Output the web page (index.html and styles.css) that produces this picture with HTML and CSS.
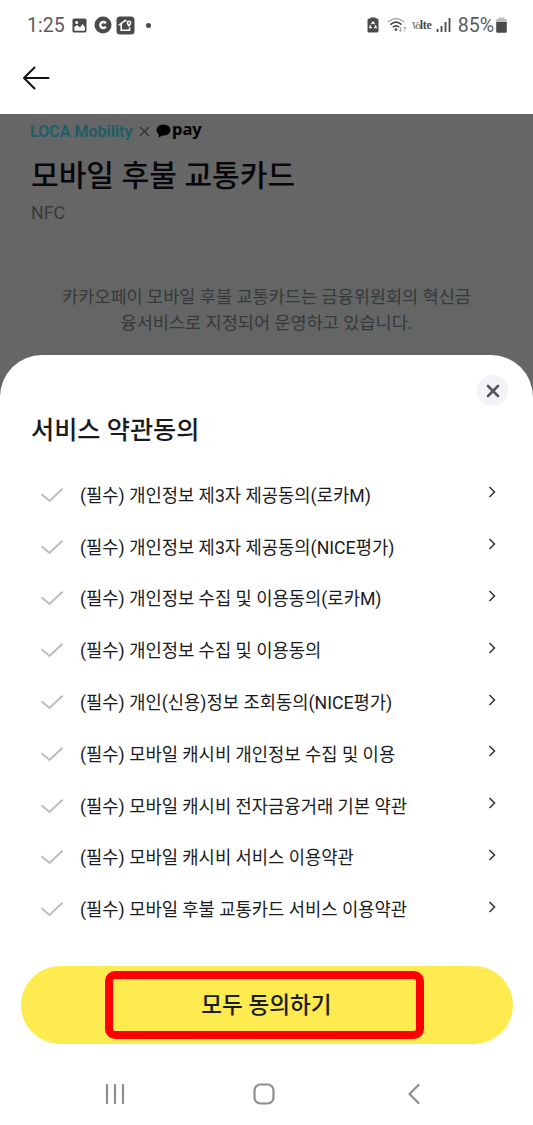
FILE: index.html
```html
<!DOCTYPE html>
<html lang="ko">

<head>
    <meta charset="UTF-8">
    <meta name="viewport" content="width=device-width, initial-scale=1.0">
    <title>모바일 후불 교통카드</title>
    <link rel="stylesheet" href="styles.css">
</head>

<body>
    <div class="status-bar">
        <span class="time">1:25</span>
        <svg class="icon-gallery" width="15" height="15" viewBox="0 0 16 16">
            <rect x="0.5" y="0.5" width="15" height="15" rx="2" fill="#4a4a4a"/>
            <circle cx="5" cy="4.8" r="1.6" fill="#fff"/>
            <path d="M2.500 9.500L5.500 7.500l3 2.500L11.300 6.500l2.400 3v4H2.500z" fill="#fff"/>
        </svg>
        <svg class="icon-c" width="18" height="18" viewBox="0 0 18 18">
            <circle cx="9" cy="9" r="8.5" fill="#4a4a4a"/>
            <path d="M11.800 7.400A3 3 0 1 0 11.800 10.600" fill="none" stroke="#fff" stroke-width="2.400"/>
        </svg>
        <svg class="icon-home-app" width="19" height="19" viewBox="0 0 19 19">
            <rect x="0.5" y="0.5" width="18" height="18" rx="3.500" fill="#4a4a4a"/>
            <path d="M10.500 5L9.200 4.400 4 8.400h1.200v5.800h8.400v-2.600" fill="none" stroke="#fff" stroke-width="1.600"/>
            <path d="M13 4.600a2.300 2.300 0 0 1 2.300 2.300c0 1.700-2.300 4-2.300 4s-2.300-2.300-2.300-4A2.300 2.300 0 0 1 13 4.600z" fill="#fff"/>
            <circle cx="13" cy="6.900" r="0.900" fill="#4a4a4a"/>
        </svg>
        <span class="dot"></span>
        <svg class="icon-saver" width="12" height="16" viewBox="0 0 12 16">
            <path d="M3.500 1.600V0.500h5v1.100H10a1.500 1.500 0 0 1 1.500 1.500v11A1.400 1.400 0 0 1 10 15.500H2a1.400 1.400 0 0 1-1.500-1.400v-11A1.500 1.500 0 0 1 2 1.600z" fill="#4a4a4a"/>
            <path d="M4.400 7L6 5l1.600 2M8.400 8.300l.8 2.400H7M5 10.700H2.800l.8-2.400" fill="none" stroke="#fff" stroke-width="1.300"/>
        </svg>
        <svg class="icon-wifi" width="21" height="16" viewBox="0 0 21 16">
            <g fill="none" stroke-width="1.600">
                <path d="M1 5Q9 -2 17 5" stroke="#aaa"/>
                <path d="M3.400 7.600Q9 2.800 14.600 7.600" stroke="#4a4a4a"/>
                <path d="M5.800 10.200Q9 7.600 12.200 10.200" stroke="#4a4a4a"/>
            </g>
            <circle cx="9" cy="12.600" r="1.400" fill="#4a4a4a"/>
            <path d="M13.500 10v4.500M12 13l1.500 1.600L15 13M17.800 14.500V10M16.300 11.500l1.500-1.600 1.500 1.600" fill="none" stroke="#aaa" stroke-width="1"/>
        </svg>
        <span class="volte"><i>Vo</i><b>lte</b></span>
        <svg class="icon-signal" width="15" height="16" viewBox="0 0 15 16">
            <path d="M1.500 15v-3M5.500 15V9M9.500 15V5M13.500 15V1" stroke="#4a4a4a" stroke-width="1.800"/>
        </svg>
        <span class="percent">85%</span>
        <svg class="icon-battery" width="11" height="16" viewBox="0 0 11 16">
            <path d="M2.500 2V.5h6V2H10a1 1 0 0 1 .8 1v2.500H.2V3A1 1 0 0 1 1 2z" fill="#bdbdbd"/>
            <path d="M.2 5h10.600v9.500a1.200 1.200 0 0 1-1.200 1.200H1.400A1.200 1.200 0 0 1 .2 14.500z" fill="#4a4a4a"/>
        </svg>
    </div>

    <div class="header">
        <svg width="28" height="24" viewBox="0 0 28 24">
            <path d="M26.500 12H2M12.500 1.500L2 12l10.500 10.500" fill="none" stroke="#111118" stroke-width="2" stroke-linecap="round" stroke-linejoin="round"/>
        </svg>
    </div>

    <!-- Dimmed page behind the sheet -->
    <div class="page">
        <div class="brand">
            <span class="loca">LOCA Mobility</span>
            <svg class="times" width="11" height="11" viewBox="0 0 11 11">
                <path d="M1 1l9 9M10 1l-9 9" stroke="#303030" stroke-width="1.200"/>
            </svg>
            <svg class="bubble" width="15" height="14" viewBox="0 0 15 14">
                <ellipse cx="7.500" cy="6" rx="7" ry="5.500" fill="#000"/>
                <path d="M2.500 9L2.800 13.500 8 10.500z" fill="#000"/>
            </svg>
            <span class="pay">pay</span>
        </div>
        <h1>모바일 후불 교통카드</h1>
        <p class="sub">NFC</p>
        <div class="notice">카카오페이 모바일 후불 교통카드는 금융위원회의 혁신금<br>융서비스로 지정되어 운영하고 있습니다.</div>
    </div>

    <!-- Terms sheet -->
    <div class="sheet">
        <button class="close">
            <svg width="14" height="14" viewBox="0 0 14 14">
                <path d="M2 2l10 10M12 2L2 12" stroke="#55565a" stroke-width="2.600" stroke-linecap="round"/>
            </svg>
        </button>
        <h2>서비스 약관동의</h2>
        <ul class="terms" id="terms"></ul>
        <button class="agree">
            <span class="highlight">모두 동의하기</span>
        </button>
    </div>

    <div class="nav-bar">
        <svg width="20" height="20" viewBox="0 0 20 20">
            <path d="M2 1v18M10 1v18M18 1v18" stroke="#8e8e8e" stroke-width="2.200" stroke-linecap="round"/>
        </svg>
        <svg class="home" width="22" height="22" viewBox="0 0 22 22">
            <rect x="1.500" y="1.500" width="19" height="19" rx="6" fill="none" stroke="#8e8e8e" stroke-width="2.200"/>
        </svg>
        <svg width="12" height="20" viewBox="0 0 12 20">
            <path d="M10.500 1L1.500 10l9 9" fill="none" stroke="#8e8e8e" stroke-width="2.200" stroke-linecap="round"/>
        </svg>
    </div>

    <script>
        const terms = [
            "개인정보 제3자 제공동의(로카M)",
            "개인정보 제3자 제공동의(NICE평가)",
            "개인정보 수집 및 이용동의(로카M)",
            "개인정보 수집 및 이용동의",
            "개인(신용)정보 조회동의(NICE평가)",
            "모바일 캐시비 개인정보 수집 및 이용",
            "모바일 캐시비 전자금융거래 기본 약관",
            "모바일 캐시비 서비스 이용약관",
            "모바일 후불 교통카드 서비스 이용약관"
        ];

        const list = document.getElementById("terms");
        terms.forEach(term => {
            const item = document.createElement("li");
            item.innerHTML = `
                <svg class="check" width="24" height="16" viewBox="0 0 24 16">
                    <path d="M1.500 7.300l8 6.700L22.500 1.800" fill="none" stroke="#bcbcbc" stroke-width="2"/>
                </svg>
                <span>(필수) ${term}</span>
                <svg class="arrow" width="8" height="12" viewBox="0 0 8 12">
                    <path d="M1.500 1L6.500 6l-5 5" fill="none" stroke="#333" stroke-width="1.500"/>
                </svg>
            `;
            list.appendChild(item);
        });
    </script>
</body>

</html>
```

FILE: styles.css
```css
* {
    margin: 0;
    padding: 0;
    box-sizing: border-box;
}

body {
    font-family: Roboto, "Noto Sans CJK KR", sans-serif;
    background-color: #fff;
    color: #1a1b20;
    width: 533px;
    height: 1125px;
    overflow: hidden;
}

svg {
    display: block;
    flex-shrink: 0;
}

button {
    border: none;
    font-family: inherit;
    color: inherit;
}

/* Status bar */
.status-bar {
    display: flex;
    align-items: center;
    height: 50px;
    padding: 0 26px 0 27px;
    color: #5c5c5c;
    font-size: 19.5px;
}

.time {
    width: 37px;
    margin-right: 8px;
}

.icon-gallery {
    margin-right: 7px;
}

.icon-c {
    margin-right: 4px;
}

.dot {
    width: 5px;
    height: 5px;
    margin-left: 11px;
    border-radius: 50%;
    background-color: #4a4a4a;
}

.icon-saver {
    margin-left: auto;
    margin-right: 8px;
}

.icon-wifi {
    margin-right: 4px;
}

.volte {
    display: flex;
    align-items: baseline;
    width: 22px;
    margin-right: 2px;
    font-family: "Liberation Serif", serif;
    font-size: 10px;
    letter-spacing: -1px;
}

.volte b {
    font-size: 12px;
    letter-spacing: -0.3px;
    color: #4a4a4a;
}

.percent {
    margin-left: 7px;
    margin-right: 2px;
}

/* Header */
.header {
    display: flex;
    align-items: center;
    height: 64px;
    padding: 0 22px 8px;
}

/* Page behind */
.page {
    height: 290px;
    padding: 5px 31px 0;
    background-color: #666;
}

.brand {
    display: flex;
    align-items: center;
    height: 24px;
    margin-left: -1px;
}

.loca {
    width: 103px;
    font-size: 16px;
    font-weight: bold;
    white-space: nowrap;
    color: #215e67;
}

.times {
    margin: 0 6px;
}

.bubble {
    margin-right: 1px;
}

.pay {
    font-family: "Noto Sans", sans-serif;
    font-size: 16.5px;
    font-weight: bold;
    line-height: 20px;
    color: #000;
    margin-top: -4px;
}

h1 {
    margin-top: 11px;
    font-size: 30.1px;
    font-weight: 500;
    line-height: 44px;
    color: #08080c;
}

.sub {
    margin-top: 4px;
    font-size: 17.8px;
    line-height: 22px;
    color: #3a3a3a;
}

.notice {
    height: 160px;
    margin-top: 33px;
    padding-top: 26px;
    border: 1px solid #616464;
    border-radius: 20px;
    background-color: #636665;
    color: #37393a;
    font-size: 17.55px;
    line-height: 26px;
    text-align: center;
    white-space: nowrap;
}

/* Terms sheet */
.sheet {
    position: relative;
    height: 708px;
    margin-top: -49px;
    padding: 57px 20px 0;
    border-radius: 42px 42px 0 0;
    background-color: #fff;
}

.close {
    position: absolute;
    top: 20px;
    right: 25px;
    display: flex;
    align-items: center;
    justify-content: center;
    width: 31px;
    height: 31px;
    border-radius: 50%;
    background-color: #f2f3f6;
}

h2 {
    padding-left: 11px;
    font-size: 25.2px;
    font-weight: 500;
    line-height: 38px;
}

.terms {
    margin-top: 18px;
    list-style: none;
}

.terms li {
    display: flex;
    align-items: center;
    height: 51.8px;
    padding: 0 17px 0 20px;
    font-size: 17.7px;
    white-space: nowrap;
}

.check {
    margin-right: 16px;
    margin-top: 2px;
}

.arrow {
    margin-left: auto;
    margin-top: -3px;
}

.agree {
    display: flex;
    justify-content: center;
    align-items: center;
    width: 492px;
    height: 78px;
    margin-top: 32px;
    margin-left: 1px;
    border-radius: 39px;
    background-color: #fdeb4f;
}

.highlight {
    width: 319px;
    height: 68px;
    margin-right: 5px;
    margin-top: -1px;
    padding-left: 4px;
    border: 8px solid #ff0000;
    border-radius: 10px;
    font-size: 22.6px;
    font-weight: 500;
    line-height: 53px;
}

/* Navigation bar */
.nav-bar {
    display: flex;
    align-items: center;
    justify-content: space-between;
    height: 62px;
    padding: 0 113px 0 105px;
}

.home {
    margin-right: 6px;
}
```
